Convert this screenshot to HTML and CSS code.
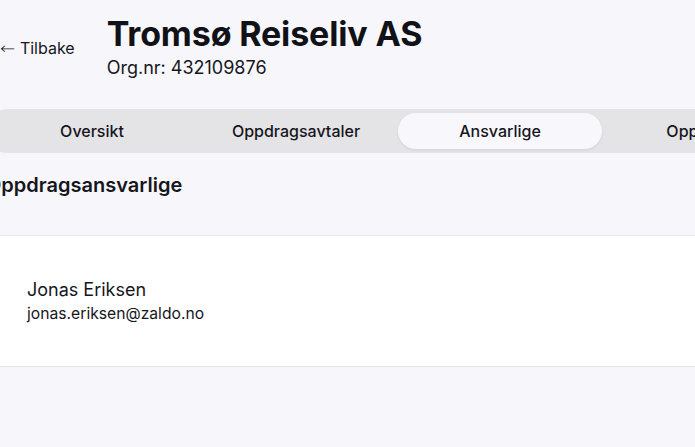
FILE: index.html
```html
<!DOCTYPE html>
<html lang="no">
<head>
<meta charset="utf-8">
<title>Tromsø Reiseliv AS</title>
<link rel="stylesheet" href="styles.css">
</head>
<body>
<div class="page">
  <header class="header">
    <a class="back" href="#"><span class="back-arrow">←</span> Tilbake</a>
    <div class="title-block">
      <h1 class="title">Tromsø Reiseliv AS</h1>
      <div class="orgnr">Org.nr: 432109876</div>
    </div>
  </header>
  <nav class="tabs">
    <div class="tab">Oversikt</div>
    <div class="tab">Oppdragsavtaler</div>
    <div class="tab tab-active">Ansvarlige</div>
    <div class="tab">Oppgaver</div>
  </nav>
  <h2 class="section-title">Oppdragsansvarlige</h2>
  <section class="card">
    <div class="person">
      <div class="person-name">Jonas Eriksen</div>
      <div class="person-email">jonas.eriksen@zaldo.no</div>
    </div>
  </section>
</div>
</body>
</html>
```
FILE: styles.css
```css
html, body {
  margin: 0;
  padding: 0;
  background: #f7f7fb;
  overflow: hidden;
}
body {
  font-family: Inter, "Noto Sans", sans-serif;
  color: #16161d;
}
.page {
  margin-left: -14px;
  width: 1000px;
}
.header {
  display: flex;
  align-items: center;
  gap: 32px;
  padding: 13px 0 0 14px;
}
.back {
  font-size: 16px;
  color: #16161d;
  text-decoration: none;
  line-height: 20px;
  margin-top: 3px;
}
.back-arrow {
  font-family: "DejaVu Sans", sans-serif;
  font-weight: 300;
  display: inline-block;
  transform: scaleX(1.12);
  transform-origin: left center;
  margin-right: 2px;
}
.title-block {
  display: flex;
  flex-direction: column;
}
.title {
  margin: 0;
  font-size: 34px;
  line-height: 42px;
  font-weight: 700;
  letter-spacing: -0.15px;
  color: #111118;
}
.orgnr {
  font-size: 18px;
  line-height: 24px;
  margin-top: 1px;
}
.tabs {
  display: flex;
  margin-top: 29px;
  padding: 4px;
  background: #e4e4e6;
  border-radius: 22px;
  width: 860px;
}
.tab {
  width: 204px;
  height: 36px;
  display: flex;
  align-items: center;
  justify-content: center;
  font-size: 16px;
  font-weight: 500;
  border-radius: 18px;
}
.tab-active {
  background: #f8f8fc;
  box-shadow: 0 1px 3px rgba(0, 0, 0, 0.08);
}
.section-title {
  margin: 19px 0 37px;
  font-size: 20px;
  line-height: 26px;
  font-weight: 600;
}
.card {
  background: #ffffff;
  border-top: 1px solid #e4e4ea;
  border-bottom: 1px solid #e4e4ea;
  height: 130px;
  display: flex;
  align-items: center;
  padding-left: 41px;
}
.person-name {
  font-size: 18px;
  line-height: 22px;
  font-weight: 400;
}
.person-email {
  font-size: 15.7px;
  line-height: 20px;
  margin-top: 3px;
}
```
